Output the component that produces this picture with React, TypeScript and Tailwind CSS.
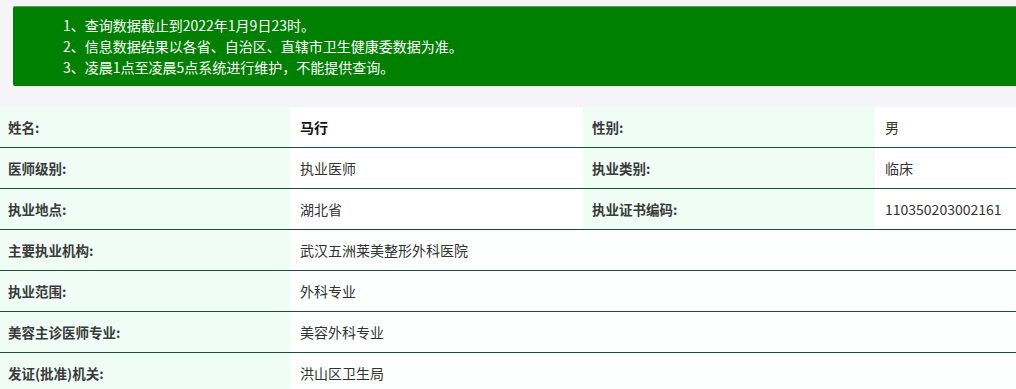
import React from 'react';

const notices = [
  '1、查询数据截止到2022年1月9日23时。',
  '2、信息数据结果以各省、自治区、直辖市卫生健康委数据为准。',
  '3、凌晨1点至凌晨5点系统进行维护，不能提供查询。',
];

type Row = { label: string; value: string; label2?: string; value2?: string; strong?: boolean };

const rows: Row[] = [
  { label: '姓名:', value: '马行', label2: '性别:', value2: '男', strong: true },
  { label: '医师级别:', value: '执业医师', label2: '执业类别:', value2: '临床' },
  { label: '执业地点:', value: '湖北省', label2: '执业证书编码:', value2: '110350203002161' },
  { label: '主要执业机构:', value: '武汉五洲莱美整形外科医院' },
  { label: '执业范围:', value: '外科专业' },
  { label: '美容主诊医师专业:', value: '美容外科专业' },
  { label: '发证(批准)机关:', value: '洪山区卫生局' },
];

const App = () => {
  return (
    <div
      className="min-h-screen bg-white text-[#333]"
      style={{ fontFamily: '"Noto Sans CJK SC", "Noto Sans", sans-serif' }}
    >
      <div className="bg-[#f5f4f6] pt-[6px] pb-[21px] pl-[13px]">
        <div className="bg-[#008000] rounded-l-[2px] h-[80px] pt-[8px] pl-[50px] border-t border-[#5a9a5a]">
          {notices.map((n, i) => (
            <div key={i} className="text-white text-[14px] leading-[21px] whitespace-nowrap">
              {n}
            </div>
          ))}
        </div>
      </div>

      <div>
        {rows.map((r, i) => (
          <div
            key={i}
            className="grid grid-cols-[290px_293px_292px_1fr] h-[41px] border-b border-[#1f4d3d] text-[14px]"
          >
            <div className="bg-[#effdf6] pl-[8px] flex items-center font-bold text-[13.5px] text-[#3a3a3a]">
              {r.label}
            </div>
            {r.label2 ? (
              <>
                <div
                  className={
                    'pl-[10px] flex items-center ' +
                    (r.strong ? 'font-bold text-[#111]' : 'text-[#333]')
                  }
                >
                  {r.value}
                </div>
                <div className="bg-[#effdf6] pl-[9px] flex items-center font-bold text-[13.5px] text-[#3a3a3a]">
                  {r.label2}
                </div>
                <div className="pl-[10px] flex items-center text-[#333] whitespace-nowrap">{r.value2}</div>
              </>
            ) : (
              <div className="col-span-3 bg-[#fcfffe] pl-[10px] flex items-center text-[#333]">{r.value}</div>
            )}
          </div>
        ))}
      </div>
    </div>
  );
};

export default App;
